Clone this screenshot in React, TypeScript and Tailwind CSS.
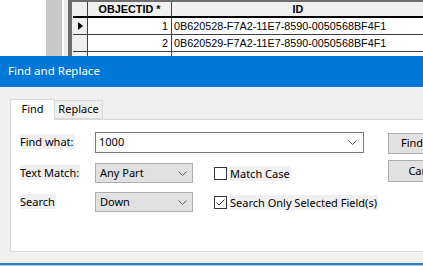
import React from "react";

const ROWS = [
  { oid: 1, id: "0B620528-F7A2-11E7-8590-0050568BF4F1", current: true },
  { oid: 2, id: "0B620529-F7A2-11E7-8590-0050568BF4F1", current: false },
  { oid: 3, id: "0B62052A-F7A2-11E7-8590-0050568BF4F1", current: false },
];

function Chevron() {
  return (
    <svg width="9" height="5" viewBox="0 0 9 5" className="shrink-0">
      <polyline points="0.5,0.5 4.5,4.5 8.5,0.5" fill="none" stroke="#606060" strokeWidth="1" />
    </svg>
  );
}

function Select({ value }: { value: string }) {
  return (
    <div className="w-[98px] h-[20px] shrink-0 bg-[#e1e1e1] border border-[#adadad] flex items-center justify-between pl-[4px] pr-[5px]">
      <span>{value}</span>
      <Chevron />
    </div>
  );
}

function Checkbox({ checked, label }: { checked: boolean; label: string }) {
  return (
    <div className="flex items-center whitespace-nowrap">
      <div className="w-[13px] h-[13px] shrink-0 border border-[#333333] bg-white flex items-center justify-center">
        {checked && (
          <svg width="11" height="11" viewBox="0 0 11 11">
            <polyline points="1.5,5.5 4,8 9.5,2.5" fill="none" stroke="#333333" strokeWidth="1" />
          </svg>
        )}
      </div>
      <span className="ml-[3px] bg-[#f0f0f0] leading-[15px] pr-[1px]">{label}</span>
    </div>
  );
}

function Label({ text }: { text: string }) {
  return (
    <div className="w-[75px] shrink-0 whitespace-nowrap">
      <span className="bg-[#f0f0f0] leading-[15px] inline-block pr-[1px]">{text}</span>
    </div>
  );
}

export default function App() {
  return (
    <div className="w-[423px] h-[266px] overflow-hidden bg-white">
      {/* attribute table behind the dialog */}
      <div className="h-[56px] flex overflow-hidden">
        <div className="w-[46px] shrink-0 bg-white" />
        <div className="w-[16px] shrink-0 bg-[#c8c8c8]" />
        <div className="w-[2px] shrink-0 bg-white" />
        <div className="w-[4px] shrink-0 bg-[#ececec]" />
        <div className="w-[4px] shrink-0 bg-[#6d6d6d]" />
        <div className="flex-1 border-t-2 border-[#6d6d6d] pl-[1px] bg-[#f0f0f0] font-['Liberation_Sans',Arial,sans-serif] text-[10.8px] text-black whitespace-nowrap">
          <div className="flex h-[16px] border-b-2 border-black">
            <div className="w-[15px] shrink-0 border-r border-[#404040] bg-[#f0f0f0]" />
            <div className="w-[84px] shrink-0 border-r border-[#404040] bg-[#f0f0f0] font-bold flex items-center justify-center">
              OBJECTID *
            </div>
            <div className="w-[252px] shrink-0 bg-[#f0f0f0] font-bold flex items-center justify-center">ID</div>
          </div>
          {ROWS.map((r) => (
            <div key={r.oid} className="flex h-[17px] border-b border-[#404040]">
              <div className="w-[15px] shrink-0 border-r border-[#404040] bg-[#f0f0f0] flex items-center justify-center">
                {r.current && (
                  <svg width="5" height="8" viewBox="0 0 5 8">
                    <polygon points="0,0 5,4 0,8" fill="#000" />
                  </svg>
                )}
              </div>
              <div className="w-[84px] shrink-0 border-r border-[#404040] bg-white flex items-center justify-end pr-[3px]">
                {r.oid}
              </div>
              <div className="w-[252px] shrink-0 bg-white flex items-center pl-[2px]">{r.id}</div>
            </div>
          ))}
        </div>
      </div>

      {/* dialog */}
      <div className="font-['Noto_Sans',sans-serif] text-[11px] text-black">
        <div className="h-[31px] bg-[#0078d7] text-white text-[11.5px] flex items-center pl-[8px] pb-[1px]">
          Find and Replace
        </div>
        <div className="h-[176px] bg-[#f0f0f0] pt-[11px] pl-[10px] flex flex-col">
          <div className="flex items-end h-[21px]">
            <div className="w-[45px] h-[21px] bg-white border border-b-0 border-[#d9d9d9] flex items-center justify-center relative z-10 -mb-px pb-[2px]">
              Find
            </div>
            <div className="w-[48px] h-[19px] border border-l-0 border-[#d9d9d9] flex items-center justify-center">
              Replace
            </div>
          </div>
          <div className="h-[133px] bg-white border border-r-0 border-[#d9d9d9] pt-[12px] pl-[9px] flex">
            <div className="w-[368px] shrink-0 flex flex-col">
              <div className="flex items-center h-[21px]">
                <Label text="Find what:" />
                <div className="w-[269px] h-[21px] shrink-0 border border-[#7a7a7a] bg-white flex items-center justify-between pl-[3px] pr-[6px]">
                  <span>1000</span>
                  <Chevron />
                </div>
              </div>
              <div className="flex items-center h-[20px] mt-[10px]">
                <Label text="Text Match:" />
                <Select value="Any Part" />
                <div className="ml-[21px]">
                  <Checkbox checked={false} label="Match Case" />
                </div>
              </div>
              <div className="flex items-center h-[20px] mt-[9px]">
                <Label text="Search" />
                <Select value="Down" />
                <div className="ml-[21px]">
                  <Checkbox checked={true} label="Search Only Selected Field(s)" />
                </div>
              </div>
            </div>
            <div className="flex flex-col pt-[1px] gap-[6px] whitespace-nowrap">
              <div className="w-[75px] h-[21px] bg-[#e1e1e1] border border-[#adadad] flex items-center justify-center">
                Find Next
              </div>
              <div className="w-[75px] h-[22px] bg-[#e1e1e1] border border-[#adadad] flex items-center justify-center">
                Cancel
              </div>
            </div>
          </div>
        </div>
        <div className="h-[2px] bg-[#1883d7]" />
        <div className="h-[1px] bg-[#c8c8c8]" />
      </div>
    </div>
  );
}
